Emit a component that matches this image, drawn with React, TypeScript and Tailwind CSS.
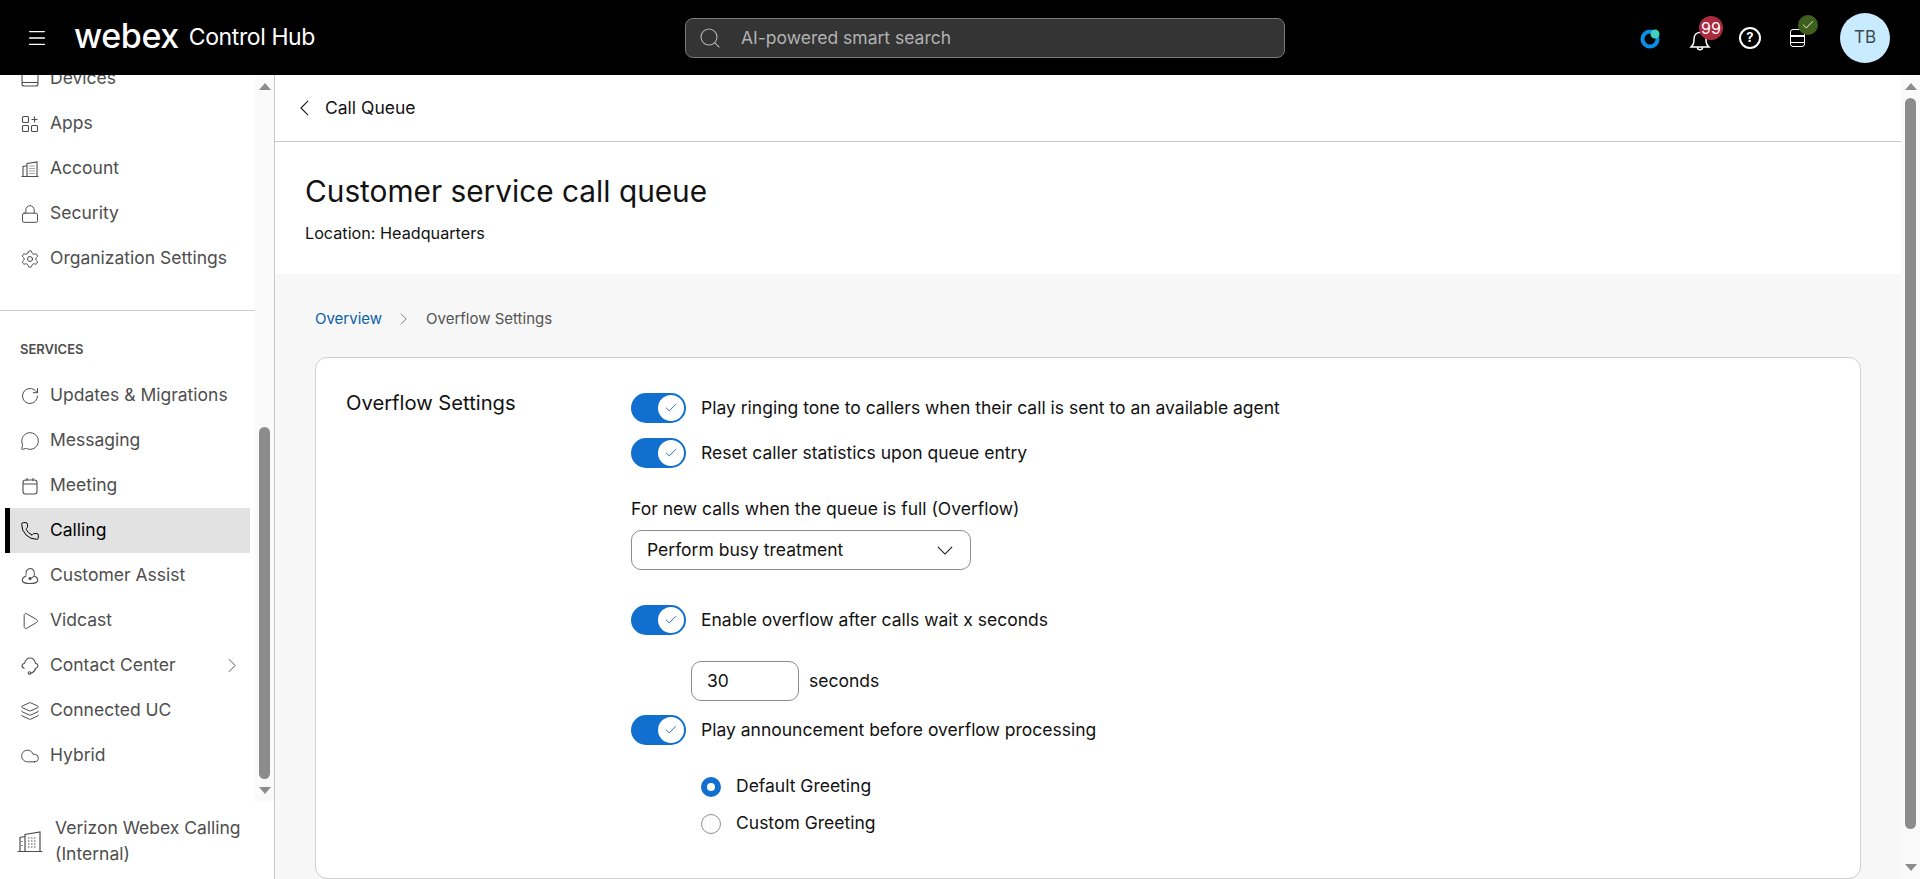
import React from "react";
import { Check, Cloud, Layers, Lock, Menu, MessageCircle, Phone, Play, RotateCw, Search, Settings } from "lucide-react";

type IconProps = { className?: string };

const Chev = ({ dir, className }: { dir: "left" | "right" | "down"; className?: string }) => (
  <svg
    viewBox={dir === "down" ? "0 0 18 10" : "0 0 10 18"}
    fill="none"
    stroke="currentColor"
    strokeWidth="1.2"
    className={className}
  >
    {dir === "left" && <path d="M9 1 1 9l8 8" />}
    {dir === "right" && <path d="m1 1 8 8-8 8" />}
    {dir === "down" && <path d="m1 1 8 8 8-8" />}
  </svg>
);

const DevicesIcon = ({ className }: IconProps) => (
  <svg viewBox="0 0 18 18" fill="none" stroke="currentColor" strokeWidth="1.1" className={className}>
    <rect x="1" y="2" width="16" height="14" rx="2" />
    <path d="M1 12.5h16" />
  </svg>
);

const AppsIcon = ({ className }: IconProps) => (
  <svg viewBox="0 0 18 18" fill="none" stroke="currentColor" strokeWidth="1.1" className={className}>
    <rect x="1.5" y="1.5" width="6" height="6" rx="1" />
    <rect x="1.5" y="10.5" width="6" height="6" rx="1" />
    <rect x="10.5" y="10.5" width="6" height="6" rx="1" />
    <path d="M13.5 1.5v6M10.5 4.5h6" />
  </svg>
);

const AccountIcon = ({ className }: IconProps) => (
  <svg viewBox="0 0 18 18" fill="none" stroke="currentColor" strokeWidth="1.1" className={className}>
    <path d="M.5 16.5h17M2 16.5V6.500l4-.8M6 16.5V3.500l10-1.500v14.500" />
    <path d="M8.500 6h5M8.500 8.500h5M8.500 11h5M8.500 13.500h5" strokeDasharray="1 1" />
  </svg>
);

const MeetingIcon = ({ className }: IconProps) => (
  <svg viewBox="0 0 18 18" fill="none" stroke="currentColor" strokeWidth="1.1" className={className}>
    <rect x="2" y="3" width="14" height="14" rx="2.500" />
    <path d="M2 7h14M6 1v3M12 1v3" />
  </svg>
);

const AssistIcon = ({ className }: IconProps) => (
  <svg viewBox="0 0 18 18" fill="none" stroke="currentColor" strokeWidth="1.1" className={className}>
    <path d="M5 8.500C4.500 4 6.500 1.500 9.300 1.500s4.700 2.500 4 7" />
    <path d="M5.200 9c-3 1-4.200 3-3.700 5 .5 2 2.500 2.500 7.500 2.500s7-.5 7.500-2.500c.5-2-.8-4-3.500-5-1 1.500-2.300 2.500-3.800 2.500" />
    <circle cx="9" cy="11.500" r="1" fill="currentColor" />
  </svg>
);

const ContactIcon = ({ className }: IconProps) => (
  <svg viewBox="0 0 18 18" fill="none" stroke="currentColor" strokeWidth="1.1" className={className}>
    <path d="M3.500 11.500C1.500 10.500.8 9.500 1 8.500c.2-1 1.200-1.800 2.500-2.200C4.500 3 6.500 1 9 1s4.700 2 5.500 5.300c1.500.4 2.500 1.300 2.500 2.400 0 1.100-1 2.100-2.500 2.800-.6 2.500-2 4-4.500 4.700" />
    <circle cx="8.500" cy="16" r="1.300" />
  </svg>
);

const BuildingIcon = ({ className }: IconProps) => (
  <svg viewBox="0 0 26 22" fill="none" stroke="currentColor" strokeWidth="1.2" className={className}>
    <path d="M.5 20.500h25M3 20.500V6.500l5-1M8 20.500V3.500L23 1v19.500" />
    <path d="M11 7h9M11 10h9M11 13h9M11 16h9" strokeDasharray="1.500 1.500" />
    <path d="M5 10v1M5 14v1" />
  </svg>
);

const small = "w-[18px] h-[18px]";
const large = "w-[20px] h-[20px] -m-[1px]";

const navTop = [
  { label: "Devices", Icon: DevicesIcon, size: small },
  { label: "Apps", Icon: AppsIcon, size: small },
  { label: "Account", Icon: AccountIcon, size: small },
  { label: "Security", Icon: Lock, size: large },
  { label: "Organization Settings", Icon: Settings, size: large },
];

const navServices = [
  { label: "Updates & Migrations", Icon: RotateCw, size: large },
  { label: "Messaging", Icon: MessageCircle, size: large },
  { label: "Meeting", Icon: MeetingIcon, size: small },
  { label: "Calling", Icon: Phone, size: large, active: true },
  { label: "Customer Assist", Icon: AssistIcon, size: small },
  { label: "Vidcast", Icon: Play, size: large },
  { label: "Contact Center", Icon: ContactIcon, size: small, more: true },
  { label: "Connected UC", Icon: Layers, size: large },
  { label: "Hybrid", Icon: Cloud, size: large },
];

type NavRowProps = {
  label: string;
  Icon: React.ComponentType<any>;
  size: string;
  active?: boolean;
  more?: boolean;
};

const NavRow = ({ label, Icon, size, active, more }: NavRowProps) => (
  <div
    className={
      "flex items-center h-[45px] w-[245px] ml-[5px] pl-[11px] border-l-[5px] text-[17.5px] " +
      (active ? "bg-[#e2e2e2] border-black text-black" : "border-transparent text-[#4e4e4e]")
    }
  >
    <span className="w-[18px] h-[18px] shrink-0 flex">
      <Icon className={"shrink-0 " + size} strokeWidth={1.2} />
    </span>
    <span className="ml-[11px]">{label}</span>
    {more && <Chev dir="right" className="w-[8px] h-[15px] ml-auto mr-[14px]" />}
  </div>
);

const Scrollbar = ({ thumbTop, thumbHeight, height }: { thumbTop: string; thumbHeight: string; height: string }) => (
  <div className={"w-[19px] shrink-0 bg-[#fafafa] flex flex-col items-center " + height}>
    <div className="mt-[8px] w-0 h-0 border-x-[6.500px] border-x-transparent border-b-[7px] border-b-[#8c8c8c]" />
    <div className={"w-[11px] rounded-full bg-[#8c8c8c] " + thumbTop + " " + thumbHeight} />
    <div className="mt-auto mb-[8px] w-0 h-0 border-x-[6.500px] border-x-transparent border-t-[7px] border-t-[#8c8c8c]" />
  </div>
);

const Toggle = ({ label }: { label: string }) => (
  <div className="flex items-center h-[30px]">
    <div className="w-[55px] h-[30px] rounded-full bg-[#1170cf] flex items-center justify-end pr-[2px]">
      <div className="w-[26px] h-[26px] rounded-full bg-white flex items-center justify-center">
        <Check className="w-[14px] h-[14px] text-[#0f5fb0]" strokeWidth={1.5} />
      </div>
    </div>
    <span className="ml-[15px] text-[17.5px] text-[#121212]">{label}</span>
  </div>
);

const Radio = ({ label, checked }: { label: string; checked?: boolean }) => (
  <div className="flex items-center h-[37px]">
    {checked ? (
      <div className="w-[20px] h-[20px] rounded-full border-[6px] border-[#1170cf] bg-white" />
    ) : (
      <div className="w-[20px] h-[20px] rounded-full border border-[#8c8c8c] bg-white" />
    )}
    <span className="ml-[15px] text-[17.5px] text-[#121212]">{label}</span>
  </div>
);

export default function App() {
  return (
    <div className="h-[879px] w-[1920px] overflow-hidden flex flex-col bg-white font-['Inter',sans-serif]">
      {/* top bar */}
      <header className="h-[75px] shrink-0 bg-black flex items-center text-white relative z-10">
        <Menu className="w-[22px] h-[22px] ml-[26px]" strokeWidth={1.5} />
        <span className="ml-[26px] text-[34px] font-medium tracking-[-0.4px] leading-none mb-[3px]">webex</span>
        <span className="ml-[10px] text-[23px] tracking-[-0.4px]">Control Hub</span>
        <div className="absolute left-[685px] top-[18px] w-[600px] h-[40px] rounded-[8px] bg-[#343434] border border-[#7a7a7a] flex items-center pl-[12px] text-[#b2b2b2]">
          <Search className="w-[24px] h-[24px]" strokeWidth={1.1} />
          <span className="ml-[19px] text-[17.5px]">AI-powered smart search</span>
        </div>
        <div className="ml-auto flex items-center mr-[30px]">
          <svg viewBox="0 0 22 22" className="w-[22px] h-[22px]">
            <circle cx="10" cy="12" r="7.500" fill="none" stroke="#0a8fe6" strokeWidth="4" />
            <circle cx="15" cy="7" r="4.500" fill="#3fd0c0" />
          </svg>
          <div className="relative ml-[26px] w-[24px] h-[24px] mt-[4px]">
            <svg viewBox="0 0 24 24" fill="none" stroke="white" strokeWidth="1.500" className="w-[24px] h-[24px]">
              <path d="M3 19c2-2 3-3 3-8 0-4 2.500-6.500 6-6.500s6 2.500 6 6.500c0 5 1 6 3 8zM9.500 19.500c0 3 5 3 5 0" />
            </svg>
            <span className="absolute left-[11px] -top-[12px] w-[24px] h-[24px] rounded-full bg-[#ab2a3e] text-white text-[16px] flex items-center justify-center">99</span>
          </div>
          <div className="ml-[27px] w-[22px] h-[22px] rounded-full border-2 border-white flex items-center justify-center text-[13px] font-bold">?</div>
          <div className="relative ml-[29px] w-[15px] h-[18px] rounded-[3px] border-[1.500px] border-white flex flex-col justify-around pt-[3px]">
            <div className="h-[1.500px] bg-white" />
            <div className="h-[1.500px] bg-white" />
            <span className="absolute left-[7px] -top-[15px] w-[20px] h-[20px] rounded-full bg-[#3f5f1d] flex items-center justify-center">
              <Check className="w-[14px] h-[14px] text-white" strokeWidth={1.5} />
            </span>
          </div>
          <div className="ml-[35px] w-[50px] h-[50px] rounded-full bg-[#c9ebff] text-[#3c4a55] text-[17px] flex items-center justify-center">TB</div>
        </div>
      </header>

      <div className="flex flex-1 min-h-0">
        {/* sidebar */}
        <aside className="w-[275px] shrink-0 border-r border-[#c8c8c8] flex flex-col overflow-hidden">
          <div className="flex h-[727px] shrink-0">
            <div className="w-[255px] overflow-hidden">
              <div className="-mt-[19px]">
                {navTop.map((item) => (
                  <NavRow key={item.label} {...item} />
                ))}
              </div>
              <div className="mt-[29px] h-px bg-[#cfcfcf]" />
              <div className="mt-[30px] ml-[20px] text-[13px] font-semibold text-[#4e4e4e] leading-[16px]">SERVICES</div>
              <div className="mt-[16px]">
                {navServices.map((item) => (
                  <NavRow key={item.label} {...item} />
                ))}
              </div>
            </div>
            <Scrollbar thumbTop="mt-[337px]" thumbHeight="h-[352px]" height="h-[727px]" />
          </div>
          <div className="flex items-center mt-[13px] pl-[17px] text-[17.5px] leading-[26px] text-[#4e4e4e]">
            <BuildingIcon className="w-[26px] h-[22px] shrink-0 mt-[1px]" />
            <span className="ml-[12px]">
              Verizon Webex Calling
              <br />
              (Internal)
            </span>
          </div>
        </aside>

        {/* main */}
        <main className="flex-1 min-w-0 flex">
          <div className="flex-1 min-w-0 flex flex-col">
            <div className="h-[67px] shrink-0 border-b border-[#c8c8c8] flex items-center pl-[25px] text-[17.5px] text-[#121212]">
              <Chev dir="left" className="w-[9px] h-[16px]" />
              <span className="ml-[16px]">Call Queue</span>
            </div>
            <div className="h-[132px] shrink-0 pl-[30px] pt-[29px]">
              <h1 className="text-[29.8px] leading-[40px] text-[#121212]">Customer service call queue</h1>
              <p className="mt-[12px] text-[16.2px] leading-[20px] text-[#121212]">Location: Headquarters</p>
            </div>
            <div className="flex-1 min-h-0 bg-[#f7f7f7] px-[40px] pt-[35px]">
              <div className="flex items-center h-[20px] text-[15px]">
                <span className="text-[#0a5fa8]">Overview</span>
                <Chev dir="right" className="w-[7px] h-[12px] ml-[18px] text-[#636363]" />
                <span className="ml-[19px] text-[#545454]">Overflow Settings</span>
              </div>
              <section className="mt-[28px] h-[522px] bg-white border border-[#cfcfcf] rounded-[12px] flex pl-[30px] pt-[34px]">
                <h2 className="w-[285px] shrink-0 text-[20.2px] leading-[22px] text-[#121212]">Overflow Settings</h2>
                <div className="flex flex-col mt-[1px]">
                  <Toggle label="Play ringing tone to callers when their call is sent to an available agent" />
                  <div className="h-[15px]" />
                  <Toggle label="Reset caller statistics upon queue entry" />
                  <p className="mt-[29px] text-[17.5px] leading-[24px] text-[#121212]">For new calls when the queue is full (Overflow)</p>
                  <div className="mt-[9px] w-[340px] h-[40px] border border-[#8c8c8c] rounded-[10px] flex items-center justify-between pl-[15px] pr-[17px] text-[17.5px] text-[#121212]">
                    Perform busy treatment
                    <Chev dir="down" className="w-[16px] h-[9px]" />
                  </div>
                  <div className="h-[35px]" />
                  <Toggle label="Enable overflow after calls wait x seconds" />
                  <div className="mt-[26px] ml-[60px] flex items-center text-[17.5px] text-[#121212]">
                    <div className="w-[108px] h-[40px] border border-[#8c8c8c] rounded-[10px] flex items-center pl-[15px]">30</div>
                    <span className="ml-[10px]">seconds</span>
                  </div>
                  <div className="h-[14px]" />
                  <Toggle label="Play announcement before overflow processing" />
                  <div className="ml-[70px] mt-[23px] flex flex-col">
                    <Radio label="Default Greeting" checked />
                    <Radio label="Custom Greeting" />
                  </div>
                </div>
              </section>
            </div>
          </div>
          <Scrollbar thumbTop="mt-[8px]" thumbHeight="h-[731px]" height="h-[804px]" />
        </main>
      </div>
    </div>
  );
}
